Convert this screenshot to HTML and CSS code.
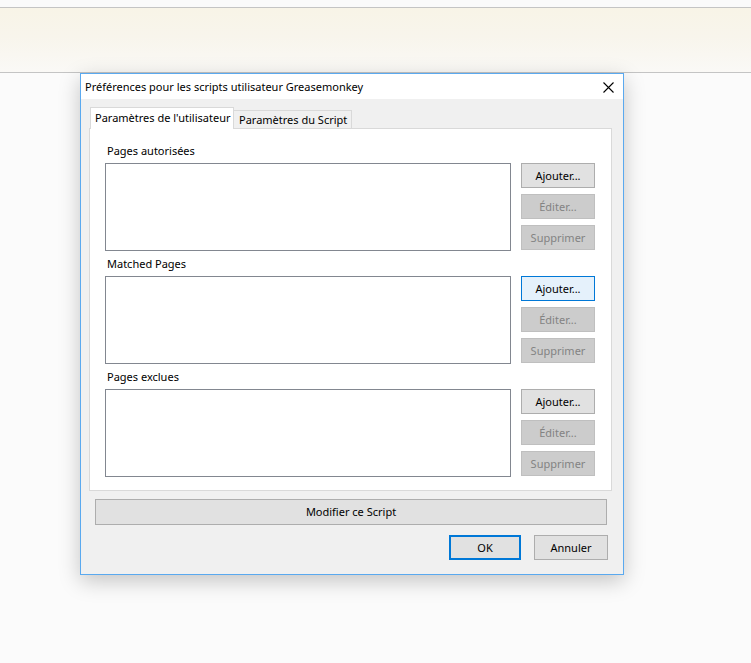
FILE: index.html
```html
<!DOCTYPE html>
<html lang="fr">
<head>
<meta charset="utf-8">
<title>Préférences Greasemonkey</title>
<link rel="stylesheet" href="styles.css">
</head>
<body>
<div class="page">
  <div class="topgap"></div>
  <div class="band"></div>
  <div class="dialog">
    <div class="titlebar">
      <span class="title">Préférences pour les scripts utilisateur Greasemonkey</span>
      <svg class="close" width="11" height="11" viewBox="0 0 11 11"><path d="M0.5 0.5 L10.5 10.5 M10.5 0.5 L0.5 10.5" stroke="#000" stroke-width="1.1" fill="none"/></svg>
    </div>
    <div class="body">
      <div class="tabs">
        <div class="tab active">Paramètres de l'utilisateur</div>
        <div class="tab inactive">Paramètres du Script</div>
      </div>
      <div class="panel">
        <div class="group">
          <div class="label">Pages autorisées</div>
          <div class="listbox"></div>
          <div class="btncol">
            <button class="btn">Ajouter...</button>
            <button class="btn disabled">Éditer...</button>
            <button class="btn disabled">Supprimer</button>
          </div>
        </div>
        <div class="group">
          <div class="label">Matched Pages</div>
          <div class="listbox"></div>
          <div class="btncol">
            <button class="btn hover">Ajouter...</button>
            <button class="btn disabled">Éditer...</button>
            <button class="btn disabled">Supprimer</button>
          </div>
        </div>
        <div class="group">
          <div class="label">Pages exclues</div>
          <div class="listbox"></div>
          <div class="btncol">
            <button class="btn">Ajouter...</button>
            <button class="btn disabled">Éditer...</button>
            <button class="btn disabled">Supprimer</button>
          </div>
        </div>
      </div>
      <button class="btn wide">Modifier ce Script</button>
      <div class="actions">
        <button class="btn ok">OK</button>
        <button class="btn cancel">Annuler</button>
      </div>
    </div>
  </div>
</div>
</body>
</html>
```
FILE: styles.css
```css
* { box-sizing: border-box; }
html, body { margin: 0; padding: 0; }
body {
  background: #fbfbfb;
  font-family: "Noto Sans", "Open Sans", sans-serif;
  font-size: 11px;
  color: #000;
  width: 751px;
  height: 663px;
  overflow: hidden;
}
.page { position: relative; width: 751px; height: 663px; }
.topgap { height: 8px; border-bottom: 1px solid #c4c4c4; background: #fafafa; }
.band {
  height: 65px;
  border-bottom: 1px solid #c4c4c4;
  background: linear-gradient(to bottom, #f8f4e7 0%, #f8f5ec 45%, #faf9f6 100%);
}
.dialog {
  position: absolute;
  left: 80px;
  top: 73px;
  width: 544px;
  height: 502px;
  border: 1px solid #5aa9ef;
  background: #f0f0f0;
  box-shadow: 0 6px 20px rgba(0, 0, 0, 0.22);
  display: flex;
  flex-direction: column;
}
.titlebar {
  height: 25px;
  background: #fff;
  display: flex;
  align-items: center;
  justify-content: space-between;
  padding: 0 9px 0 4px;
}
.title { line-height: 25px; white-space: nowrap; font-size: 11px; }
.close { display: block; margin-top: 1px; }
.body { padding: 8px 0 0 8px; }
.tabs {
  display: flex;
  align-items: flex-end;
  height: 22px;
  margin-bottom: -1px;
  padding-left: 1px;
  position: relative;
  z-index: 1;
}
.tab {
  border: 1px solid #d9d9d9;
  border-bottom: none;
  white-space: nowrap;
  overflow: hidden;
}
.tab.active {
  height: 22px;
  width: 144px;
  background: #fff;
  padding: 0 0 0 4px;
  line-height: 20px;
}
.tab.inactive {
  height: 18px;
  width: 119px;
  margin-left: -1px;
  margin-bottom: 1px;
  background: #f0f0f0;
  padding: 0 0 0 5px;
  line-height: 17px;
}
.panel {
  width: 523px;
  background: #fff;
  border: 1px solid #d9d9d9;
  padding: 13px 16px 13px 15px;
  display: flex;
  flex-direction: column;
  gap: 4px;
}
.group {
  display: grid;
  grid-template-columns: 406px 74px;
  column-gap: 10px;
  row-gap: 5px;
}
.label {
  grid-column: 1 / 3;
  height: 16px;
  line-height: 17px;
  padding-left: 2px;
}
.listbox {
  height: 88px;
  border: 1px solid #828790;
  background: #fff;
}
.btncol { display: flex; flex-direction: column; gap: 6px; }
.btn {
  font-family: inherit;
  font-size: 11px;
  color: #000;
  height: 25px;
  margin: 0;
  padding: 0;
  background: #e1e1e1;
  border: 1px solid #adadad;
  line-height: 20px;
  text-align: center;
}
.btncol .btn { width: 74px; }
.btn.hover { background: #e5f1fb; border-color: #0078d7; }
.btn.disabled { background: #cccccc; border-color: #bfbfbf; color: #838383; }
.btn.wide { display: block; width: 512px; height: 26px; margin: 8px 0 0 6px; }
.actions {
  display: flex;
  justify-content: flex-end;
  gap: 13px;
  width: 519px;
  margin-top: 10px;
}
.btn.ok { width: 72px; border: 2px solid #0078d7; }
.btn.cancel { width: 74px; }
```
